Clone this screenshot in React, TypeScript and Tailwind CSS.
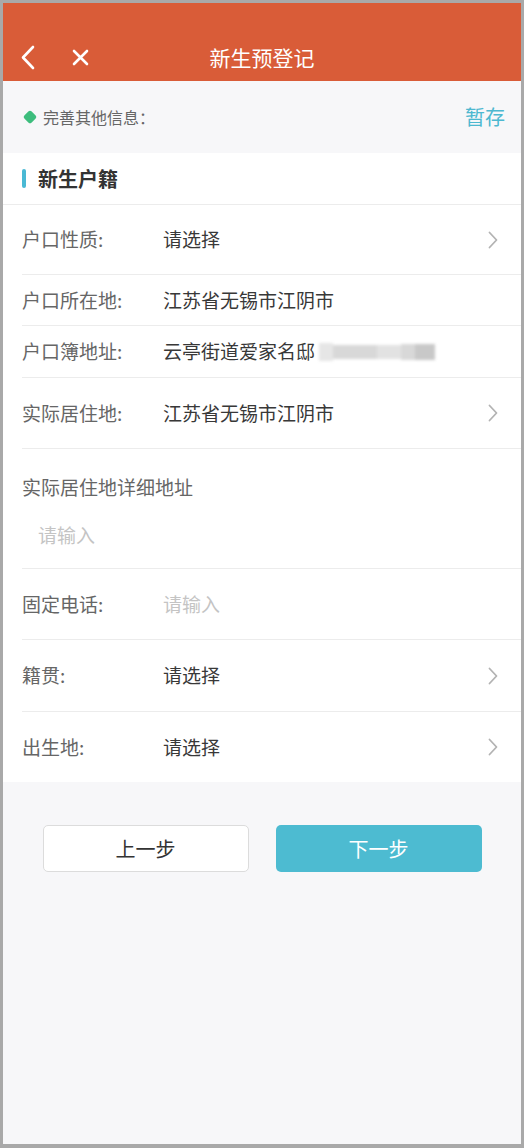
import React from "react";

const font = { fontFamily: '"Noto Sans CJK SC", "Noto Sans", sans-serif' };

function Chevron() {
  return (
    <svg width="10" height="18" viewBox="0 0 10 18" fill="none">
      <path d="M1.5 1.5 L8.5 9 L1.5 16.5" stroke="#b3b3b3" strokeWidth="1.8" strokeLinecap="round" strokeLinejoin="round" />
    </svg>
  );
}

type RowProps = {
  label: string;
  value?: string;
  placeholder?: boolean;
  arrow?: boolean;
  h: string;
  last?: boolean;
  children?: React.ReactNode;
};

function Row({ label, value, placeholder, arrow, h, last, children }: RowProps) {
  return (
    <div className={`ml-[19px] flex items-center pr-[23px] ${h} ${last ? "" : "border-b border-[#ececec]"}`}>
      <div className="w-[141px] shrink-0 text-[19px] text-[#666]">{label}</div>
      <div className={`flex flex-1 items-center text-[19px] ${placeholder ? "text-[#c4c4c4]" : "text-[#383838]"}`}>
        {value}
        {children}
      </div>
      {arrow && <Chevron />}
    </div>
  );
}

export default function App() {
  return (
    <div className="h-[1148px] w-[524px] border-x-[3px] border-t-[3px] border-b-[4px] border-[#a9a9a9] bg-[#f7f7f9]" style={font}>
      {/* Header */}
      <div className="h-[78px] bg-[#d95c38] pt-[32px]">
        <div className="relative flex h-[46px] items-center justify-center">
          <div className="absolute left-[17px] top-[10px] flex items-center gap-[36px]">
            <svg width="16" height="25" viewBox="0 0 16 25" fill="none">
              <path d="M13 2 L3 12.5 L13 23" stroke="white" strokeWidth="2.6" strokeLinecap="round" strokeLinejoin="round" />
            </svg>
            <svg width="17" height="17" viewBox="0 0 17 17" fill="none">
              <path d="M2 2 L15 15 M15 2 L2 15" stroke="white" strokeWidth="2.6" strokeLinecap="round" />
            </svg>
          </div>
          <span className="text-[21px] text-white">新生预登记</span>
        </div>
      </div>

      {/* Info bar */}
      <div className="flex h-[72px] items-center justify-between pl-[20px] pr-[16px]">
        <div className="flex items-center">
          <span className="ml-[2px] mr-[8px] inline-block h-[10px] w-[10px] rotate-45 rounded-[2px] bg-[#3dbd7d]" />
          <span className="text-[16px] text-[#666]">完善其他信息：</span>
        </div>
        <span className="text-[20px] text-[#4db8d0]">暂存</span>
      </div>

      {/* Form */}
      <div className="bg-white">
        <div className="flex h-[52px] items-center border-b border-[#ececec] pl-[19px]">
          <span className="mr-[12px] inline-block h-[19px] w-[4px] rounded-full bg-[#4ab9d4]" />
          <span className="text-[20px] font-bold text-[#333]">新生户籍</span>
        </div>
        <Row label="户口性质:" value="请选择" arrow h="h-[70px]" />
        <Row label="户口所在地:" value="江苏省无锡市江阴市" h="h-[51px]" />
        <Row label="户口簿地址:" value="云亭街道爱家名邸" h="h-[52px]">
          <div className="ml-[4px] flex h-[20px] items-center blur-[1.5px]">
            <span className="h-[18px] w-[14px] bg-[#e6e6e6]" />
            <span className="h-[14px] w-[44px] bg-[#d8d8d8]" />
            <span className="h-[14px] w-[24px] bg-[#e2e2e2]" />
            <span className="h-[16px] w-[14px] bg-[#d8d8d8]" />
            <span className="h-[16px] w-[20px] bg-[#c8c8c8]" />
          </div>
        </Row>
        <Row label="实际居住地:" value="江苏省无锡市江阴市" arrow h="h-[71px]" />
        <div className="ml-[19px] h-[120px] border-b border-[#ececec] pt-[24px]">
          <div className="text-[19px] leading-[28px] text-[#666]">实际居住地详细地址</div>
          <div className="mt-[20px] pl-[16px] text-[19px] leading-[28px] text-[#c4c4c4]">请输入</div>
        </div>
        <Row label="固定电话:" value="请输入" placeholder h="h-[71px]" />
        <Row label="籍贯:" value="请选择" arrow h="h-[72px]" />
        <Row label="出生地:" value="请选择" arrow h="h-[70px]" last />
      </div>

      {/* Buttons */}
      <div className="mt-[43px] flex justify-center gap-[27px]">
        <button className="h-[47px] w-[206px] rounded-[5px] border border-[#dcdcdc] bg-white text-[20px] text-[#333]">
          上一步
        </button>
        <button className="h-[47px] w-[206px] rounded-[5px] bg-[#4dbbd1] text-[20px] text-white">
          下一步
        </button>
      </div>
    </div>
  );
}
